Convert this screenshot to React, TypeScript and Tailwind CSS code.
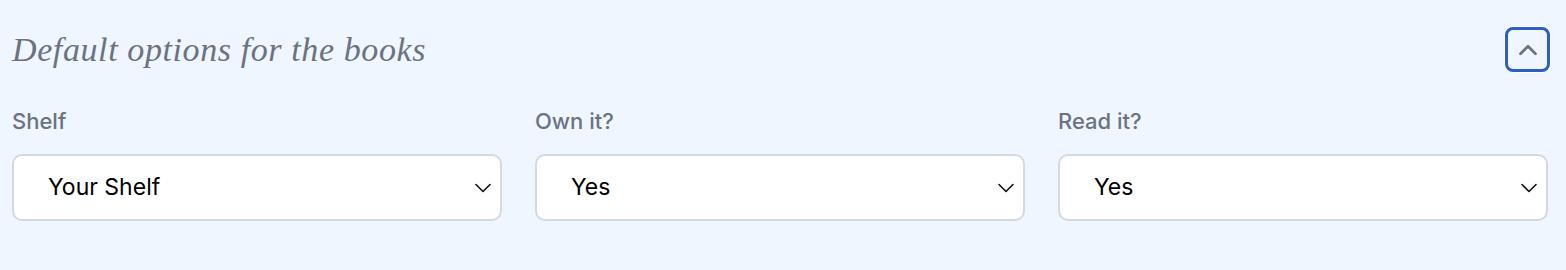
import { ChevronUp } from 'lucide-react';

const fields = [
  { label: 'Shelf', value: 'Your Shelf', options: ['Your Shelf', 'Wishlist', 'Favorites'] },
  { label: 'Own it?', value: 'Yes', options: ['Yes', 'No'] },
  { label: 'Read it?', value: 'Yes', options: ['Yes', 'No'] },
];

function SelectBox({ value, options }: { value: string; options: string[] }) {
  return (
    <div className="relative">
      <select
        defaultValue={value}
        className="w-full h-[67px] appearance-none rounded-[10px] border-2 border-[#d4d9e1] bg-white pl-[34px] pr-10 text-[23px] text-black outline-none"
      >
        {options.map((o) => (
          <option key={o}>{o}</option>
        ))}
      </select>
      {/* thin caret like the native one */}
      <svg
        width="16"
        height="10"
        viewBox="0 0 16 10"
        fill="none"
        className="pointer-events-none absolute right-[11px] top-1/2 -translate-y-1/2"
      >
        <polyline points="1,1.5 8,8.5 15,1.5" stroke="#111" strokeWidth="1.6" strokeLinecap="round" strokeLinejoin="round" />
      </svg>
    </div>
  );
}

export default function App() {
  return (
    <div className="min-h-[270px] w-full bg-[#eff6ff] pl-3 pr-[18px] pt-[27px] font-['Inter','Liberation_Sans',sans-serif]">
      {/* header */}
      <div className="flex items-center justify-between">
        <h2 className="font-['Liberation_Serif',serif] text-[34px] italic leading-none tracking-[0.6px] text-[#6b7280]">
          Default options for the books
        </h2>
        <button className="mr-[-2px] flex h-[45px] w-[45px] items-center justify-center rounded-lg border-[3px] border-[#2b5fc6] ring-1 ring-white">
          <ChevronUp size={30} strokeWidth={2.2} className="text-[#6b7280]" />
        </button>
      </div>

      {/* fields */}
      <div className="mt-[37px] grid grid-cols-3 gap-[33px]">
        {fields.map((f) => (
          <div key={f.label} className="flex flex-col gap-[21px]">
            <label className="text-[22px] font-medium leading-6 text-[#6b7280]">{f.label}</label>
            <SelectBox value={f.value} options={f.options} />
          </div>
        ))}
      </div>
    </div>
  );
}
